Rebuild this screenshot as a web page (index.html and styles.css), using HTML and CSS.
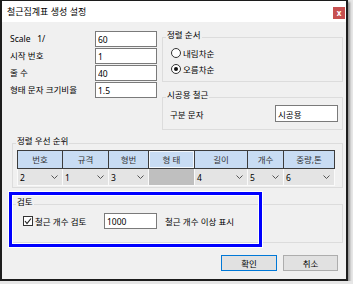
FILE: index.html
```html
<!DOCTYPE html>
<html lang="ko">
<head>
<meta charset="UTF-8">
<meta name="viewport" content="width=device-width, initial-scale=1.0">
<title>철근집계표 생성 설정</title>
<link rel="stylesheet" href="styles.css">
</head>
<body>

<div class="window">
    <div class="titlebar">
        <span class="title">철근집계표 생성 설정</span>
        <span class="close-btn">x</span>
    </div>

    <div class="client">
        <div class="top">
            <!-- Basic values -->
            <div class="fields">
                <label for="scale">Scale&nbsp;&nbsp;&nbsp;1/</label>
                <input type="text" id="scale" class="textbox" value="60">
                <label for="start-no">시작 번호</label>
                <input type="text" id="start-no" class="textbox" value="1">
                <label for="rows">줄 수</label>
                <input type="text" id="rows" class="textbox" value="40">
                <label for="ratio">형태 문자 크기비율</label>
                <input type="text" id="ratio" class="textbox" value="1.5">
            </div>

            <div class="side">
                <fieldset class="group sort-order">
                    <legend>정렬 순서</legend>
                    <div class="radio-list">
                        <label class="radio"><span class="radio-mark"></span>내림차순</label>
                        <label class="radio checked"><span class="radio-mark"></span>오름차순</label>
                    </div>
                </fieldset>

                <fieldset class="group build">
                    <legend>시공용 철근</legend>
                    <div class="build-row">
                        <label for="build-char">구분 문자</label>
                        <input type="text" id="build-char" class="textbox build-input" value="시공용">
                    </div>
                </fieldset>
            </div>
        </div>

        <!-- Sort priority grid -->
        <fieldset class="group priority">
            <legend>정렬 우선 순위</legend>
            <div class="grid">
                <div class="grid-head">
                    <div class="head-cell">번호</div>
                    <div class="head-cell">규격</div>
                    <div class="head-cell">형번</div>
                    <div class="head-cell selected">형 태</div>
                    <div class="head-cell">길이</div>
                    <div class="head-cell">개수</div>
                    <div class="head-cell">중량,톤</div>
                </div>
                <div class="grid-body" id="grid-body"></div>
            </div>
        </fieldset>

        <div class="review-wrap">
            <fieldset class="group review">
                <legend>검토</legend>
                <div class="review-row">
                    <label class="check"><span class="check-mark"><svg width="8" height="8" viewBox="0 0 8 8"><polyline points="1,4 3,6.5 7,1.5" fill="none" stroke="#222" stroke-width="1.2"/></svg></span>철근 개수 검토</label>
                    <input type="text" class="textbox count-input" value="1000">
                    <span class="review-note">철근 개수 이상 표시</span>
                </div>
            </fieldset>
            <div class="highlight"></div>
        </div>

        <div class="buttons">
            <button class="btn default">확인</button>
            <button class="btn">취소</button>
        </div>
    </div>
</div>

<script>
    // Combo cells for the priority row ('' = disabled cell)
    const priorities = ['2', '1', '3', '', '4', '5', '6'];
    const gridBody = document.getElementById('grid-body');

    priorities.forEach(value => {
        const cell = document.createElement('div');
        if (value === '') {
            cell.className = 'body-cell disabled';
        } else {
            cell.className = 'body-cell';
            cell.innerHTML = '<span>' + value + '</span>' +
                '<svg width="7" height="4" viewBox="0 0 7 4"><polyline points="0.5,0.5 3.5,3.5 6.5,0.5" fill="none" stroke="#555" stroke-width="1"/></svg>';
        }
        gridBody.appendChild(cell);
    });
</script>

</body>
</html>
```

FILE: styles.css
```css
/* Dialog window */
body {
    margin: 0;
    background-color: #e6e6e6;
    font-family: "Noto Sans", "Noto Sans CJK KR", sans-serif;
    font-size: 8.5px;
    color: #000;
}
.window {
    box-sizing: border-box;
    width: 348px;
    height: 281px;
    border: 2px solid #1c1c1c;
    border-top-width: 1px;
    background-color: #f0f0f0;
    box-shadow: 2px 2px 2px rgba(0, 0, 0, 0.35);
    display: flex;
    flex-direction: column;
}
.titlebar {
    height: 21px;
    flex-shrink: 0;
    background-color: #fff;
    display: flex;
    align-items: center;
    justify-content: space-between;
    padding: 0 1px 0 5px;
}
.title {
    font-size: 9px;
    line-height: 12px;
}
.close-btn {
    align-self: flex-start;
    margin-top: 6px;
    width: 12px;
    height: 12px;
    background-color: #c75050;
    color: #fff;
    font-size: 8px;
    font-weight: bold;
    line-height: 11px;
    text-align: center;
}
.client {
    flex: 1;
    padding: 0 3px 0 8px;
}

/* Top area */
.top {
    display: flex;
    align-items: flex-start;
    height: 108px;
}
.fields {
    margin-top: 9px;
    display: grid;
    grid-template-columns: 85px 62px;
    grid-auto-rows: 17px;
}
.fields label {
    line-height: 16px;
}
.textbox {
    box-sizing: border-box;
    height: 16px;
    margin: 0;
    padding: 0 2px;
    border: 1px solid #7a7a7a;
    background-color: #fff;
    font-family: inherit;
    font-size: 8.5px;
    color: #000;
    outline: none;
}
.side {
    width: 181px;
    margin-left: 5px;
}

/* Group boxes */
.group {
    margin: 0;
    padding: 0;
    min-width: 0;
    border: 1px solid #dcdcdc;
}
.group legend {
    margin-left: 3px;
    padding: 0 1px 4px;
    line-height: 10px;
}
.sort-order {
    margin-top: 8px;
}
.radio-list {
    padding: 1px 0 4px 8px;
}
.radio {
    display: flex;
    align-items: center;
    gap: 2px;
    height: 16px;
}
.radio-mark {
    box-sizing: border-box;
    width: 10px;
    height: 10px;
    border: 1px solid #333;
    border-radius: 50%;
    background-color: #fff;
    display: flex;
    align-items: center;
    justify-content: center;
}
.radio.checked .radio-mark::after {
    content: "";
    width: 4px;
    height: 4px;
    border-radius: 50%;
    background-color: #111;
}
.build {
    margin-top: 8px;
}
.build-row {
    display: flex;
    align-items: center;
    justify-content: space-between;
    padding: 1px 4px 7px 7px;
}
.build-input {
    width: 63px;
    height: 17px;
}

/* Priority grid */
.priority {
    margin: 6px 0 0 2px;
}
.grid {
    width: 318px;
    margin: 0 0 1px 4px;
}
.grid-head,
.grid-body {
    display: grid;
    grid-template-columns: 44px 45px 39px 45px 52px 35px 50px;
    column-gap: 1px;
}
.grid-head {
    padding: 1px;
    row-gap: 1px;
    background-color: #3c3c3c;
}
.head-cell {
    height: 17px;
    background-color: #c8dcf3;
    color: #333;
    line-height: 17px;
    text-align: center;
}
.head-cell.selected {
    box-shadow: inset 0 0 0 1px #f2f7fc;
}
.grid-body {
    padding: 0 1px 1px;
    background-color: #fafafa;
}
.body-cell {
    height: 16px;
    background-color: #e4e4e4;
    display: flex;
    align-items: center;
    justify-content: space-between;
    padding: 0 4px 0 2px;
}
.body-cell.disabled {
    background-color: #bfbfbf;
}

/* Review group with highlight */
.review-wrap {
    position: relative;
    padding-top: 9px;
}
.review {
    margin-left: 2px;
}
.review-row {
    display: flex;
    align-items: center;
    height: 16px;
    padding: 2px 0 13px 10px;
}
.check {
    display: flex;
    align-items: center;
    gap: 2px;
    width: 81px;
}
.check-mark {
    box-sizing: border-box;
    width: 10px;
    height: 10px;
    border: 1px solid #333;
    background-color: #fff;
    display: flex;
    align-items: center;
    justify-content: center;
}
.count-input {
    width: 53px;
}
.review-note {
    margin-left: 8px;
}
.highlight {
    position: absolute;
    top: 4px;
    left: -1px;
    width: 253px;
    height: 55px;
    box-sizing: border-box;
    border: 3px solid #0000ff;
    box-shadow: inset 0 0 0 1px #fff, 0 0 0 1px #fff;
    pointer-events: none;
}

/* Buttons */
.buttons {
    display: flex;
    justify-content: flex-end;
    gap: 6px;
    margin: 12px 5px 0 0;
}
.btn {
    box-sizing: border-box;
    width: 55px;
    height: 16px;
    padding: 0;
    border: 1px solid #adadad;
    background-color: #e1e1e1;
    font-family: inherit;
    font-size: 8.5px;
    color: #000;
}
.btn.default {
    width: 56px;
    border-color: #0078d7;
}
```
